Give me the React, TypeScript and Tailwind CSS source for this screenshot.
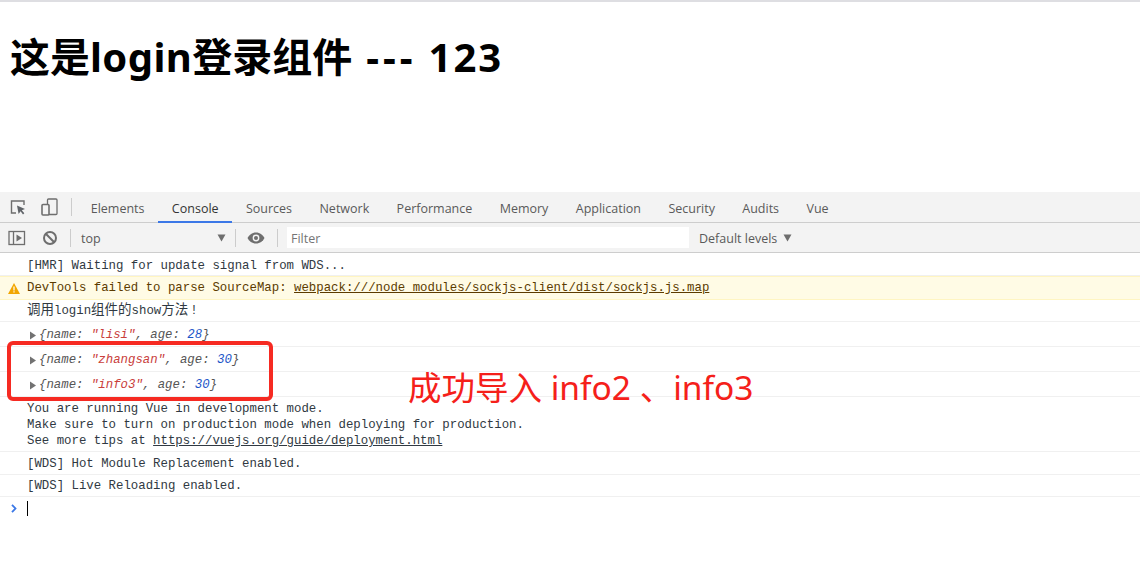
import React from 'react';

const mono = "font-['Liberation_Mono','Noto_Sans_CJK_SC',monospace] text-[12.37px] leading-[14px]";

const tabs = ['Elements', 'Console', 'Sources', 'Network', 'Performance', 'Memory', 'Application', 'Security', 'Audits', 'Vue'];

const Row = ({ className = '', children }: { className?: string; children: React.ReactNode }) => (
  <div className={`border-b border-[#f0f0f0] pl-[27px] text-[#303942] ${mono} ${className}`}>{children}</div>
);

const ObjectRow = ({ name, age }: { name: string; age: number }) => (
  <div className={`flex h-[25px] items-center border-b border-[#f0f0f0] pl-[29px] pt-[2px] ${mono}`}>
    <svg width="8" height="9" viewBox="0 0 8 9" className="mr-[2px] shrink-0">
      <path d="M1 0.5 L7 4.5 L1 8.5 Z" fill="#727272" />
    </svg>
    <span className="italic text-[#565656]">
      {'{name: '}
      <span className="text-[#c9403b]">"{name}"</span>
      {', age: '}
      <span className="text-[#1c56c8]">{age}</span>
      {'}'}
    </span>
  </div>
);

export default function App() {
  return (
    <div className="relative h-[586px] w-[1140px] overflow-hidden bg-white font-['Open_Sans','Noto_Sans_CJK_SC',sans-serif]">
      <div className="h-[2px] bg-[#dedee2]" />

      {/* Page */}
      <div className="h-[190px] pl-[10px] pt-[28px]">
        <h1 className="font-['Noto_Sans','Noto_Sans_CJK_SC',sans-serif] text-[40px] font-bold leading-[54px] whitespace-nowrap text-black">
          这是<span className="tracking-[0.4px]">login</span>登录组件<span className="ml-[14px] tracking-[4px]">---</span><span className="ml-[12px] tracking-[2px]">123</span>
        </h1>
      </div>

      {/* Tab bar */}
      <div className="flex h-[31px] items-stretch border-b border-[#cdcdcd] bg-[#f3f3f3] font-['Open_Sans',sans-serif] text-[12.5px] text-[#5a5a5a]">
        <div className="flex w-[71px] items-center pl-[10px]">
          <svg width="16" height="16" viewBox="0 0 16 16" fill="none" className="mr-[15px]">
            <path d="M6 14 H1.5 V2 H14 V6" stroke="#6e6e6e" strokeWidth="1.4" />
            <path d="M7 6.5 L15 10 L11.8 11.3 L14.3 14.3 L13 15.4 L10.6 12.3 L8.6 15 Z" fill="#5f6368" />
          </svg>
          <svg width="17" height="18" viewBox="0 0 17 18" fill="none">
            <rect x="6.5" y="1" width="9.5" height="15.5" rx="1" stroke="#6e6e6e" strokeWidth="1.3" />
            <rect x="1" y="6.5" width="7" height="10.5" rx="1" fill="#f3f3f3" stroke="#6e6e6e" strokeWidth="1.6" />
          </svg>
        </div>
        <div className="my-[6px] w-px bg-[#ccc]" />
        <div className="ml-[5px] flex">
          {tabs.map((tab) => (
            <div
              key={tab}
              className={`-mb-px flex items-center border-b-2 px-[13.7px] pt-[6px] whitespace-nowrap ${tab === 'Console' ? 'border-[#3b78e7] text-[#333]' : 'border-transparent'}`}
            >
              {tab}
            </div>
          ))}
        </div>
      </div>

      {/* Console toolbar */}
      <div className="flex h-[30px] items-center border-b border-[#cdcdcd] bg-[#f3f3f3] font-['Open_Sans',sans-serif] text-[12.5px] text-[#5a5a5a]">
        <svg width="18" height="16" viewBox="0 0 18 16" fill="none" className="ml-[8px]">
          <rect x="1" y="1.5" width="15.5" height="13" stroke="#6e6e6e" strokeWidth="1.3" />
          <path d="M5.5 1.5 V14.5" stroke="#6e6e6e" strokeWidth="1.3" />
          <path d="M8.5 4.5 L14 8 L8.5 11.5 Z" fill="#6e6e6e" />
        </svg>
        <svg width="16" height="16" viewBox="0 0 16 16" fill="none" className="ml-[16px]">
          <circle cx="8" cy="8" r="6" stroke="#6e6e6e" strokeWidth="2" />
          <path d="M3.8 3.8 L12.2 12.2" stroke="#6e6e6e" strokeWidth="2" />
        </svg>
        <div className="ml-[12px] h-[18px] w-px bg-[#ccc]" />
        <div className="flex w-[164px] items-center justify-between pl-[10px] pr-[9px]">
          <span className="pt-[3px]">top</span>
          <svg width="9" height="8" viewBox="0 0 9 8"><path d="M0.5 0.5 H8.5 L4.5 7.5 Z" fill="#6e6e6e" /></svg>
        </div>
        <div className="h-[18px] w-px bg-[#ccc]" />
        <svg width="18" height="12" viewBox="0 0 18 12" className="ml-[11px]">
          <path d="M9 0.5 C5 0.5 2 3 0.5 6 C2 9 5 11.5 9 11.5 C13 11.5 16 9 17.5 6 C16 3 13 0.5 9 0.5 Z" fill="#6e6e6e" />
          <circle cx="9" cy="6" r="3.4" fill="#f3f3f3" />
          <circle cx="9" cy="6" r="2" fill="#6e6e6e" />
        </svg>
        <div className="ml-[12px] h-[18px] w-px bg-[#ccc]" />
        <div className="ml-[9px] flex h-[21px] w-[402px] items-center bg-white pl-[4px] pt-[3px] text-[#757575]">Filter</div>
        <div className="ml-[10px] flex items-center gap-[6px]">
          <span className="pt-[3px]">Default levels</span>
          <svg width="9" height="8" viewBox="0 0 9 8"><path d="M0.5 0.5 H8.5 L4.5 7.5 Z" fill="#6e6e6e" /></svg>
        </div>
      </div>

      {/* Console messages */}
      <Row className="flex h-[23px] items-center pt-[3px]">[HMR] Waiting for update signal from WDS...</Row>
      <div className={`flex h-[24px] items-center border-y border-[#fff5c2] bg-[#fffbe5] text-[#5c3b00] ${mono}`}>
        <svg width="12" height="11" viewBox="0 0 12 11" className="ml-[8px] mr-[7px]">
          <path d="M6 0 L12 11 H0 Z" fill="#f2a600" />
          <path d="M5.4 3.5 H6.6 V7.5 H5.4 Z M5.4 8.3 H6.6 V9.5 H5.4 Z" fill="#fff" />
        </svg>
        <span>DevTools failed to parse SourceMap: <span className="underline">webpack:///node_modules/sockjs-client/dist/sockjs.js.map</span></span>
      </div>
      <Row className="flex h-[22px] items-center">
        <span className="text-[13.5px]">调用</span>login<span className="text-[13.5px]">组件的</span>show<span className="text-[13.5px]">方法</span><span className="ml-[2px]">!</span>
      </Row>
      <ObjectRow name="lisi" age={28} />
      <ObjectRow name="zhangsan" age={30} />
      <ObjectRow name="info3" age={30} />
      <Row className="flex h-[55px] flex-col justify-center pt-[2px] leading-[16px]">
        <div>You are running Vue in development mode.</div>
        <div>Make sure to turn on production mode when deploying for production.</div>
        <div>See more tips at <span className="underline">https://vuejs.org/guide/deployment.html</span></div>
      </Row>
      <Row className="flex h-[23px] items-center pt-[2px]">[WDS] Hot Module Replacement enabled.</Row>
      <Row className="flex h-[22px] items-center pt-[1px]">[WDS] Live Reloading enabled.</Row>
      <div className="flex h-[22px] items-center pl-[11px]">
        <svg width="6" height="9" viewBox="0 0 6 9" fill="none"><path d="M1 0.8 L4.5 4.5 L1 8.2" stroke="#3b78e7" strokeWidth="1.8" /></svg>
        <div className="ml-[10px] h-[15px] w-px bg-black" />
      </div>

      {/* Annotation */}
      <div className="absolute left-[7px] top-[341px] h-[60px] w-[266px] rounded-[6px] border-4 border-[#f62a22]" />
      <div className="absolute left-[408px] top-[365px] font-['Noto_Sans','Noto_Sans_CJK_SC',sans-serif] text-[33.5px] leading-[44px] whitespace-nowrap text-[#f5201a]">成功导入 info2 、info3</div>
    </div>
  );
}
